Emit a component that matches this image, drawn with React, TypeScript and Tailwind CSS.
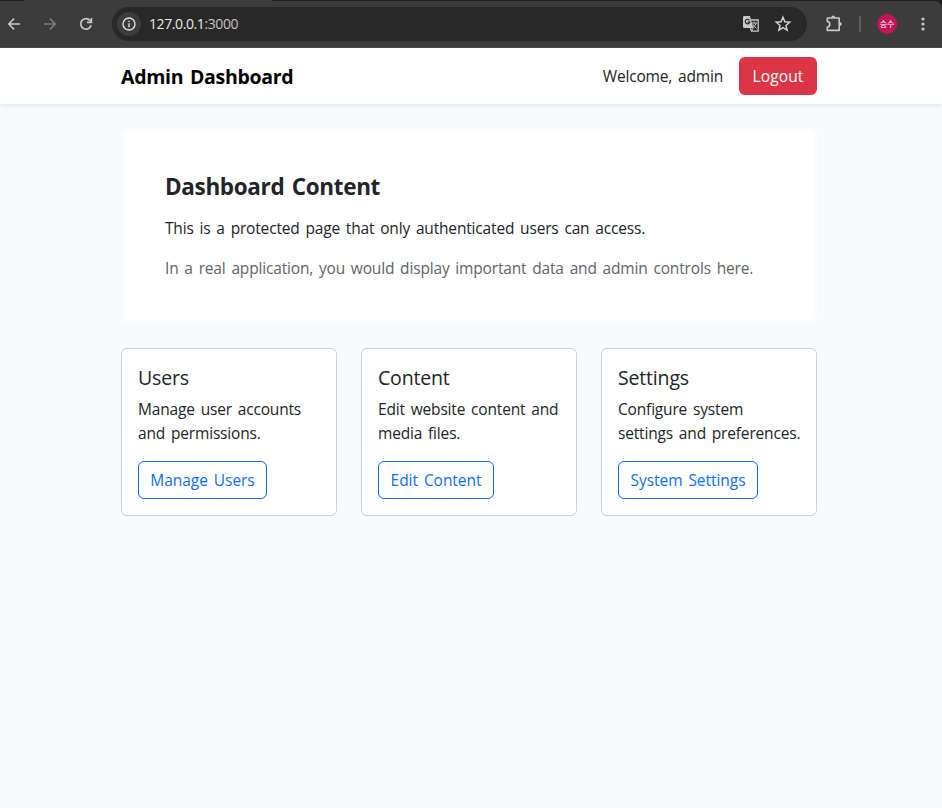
import React from "react";

function BrowserBar() {
  return (
    <div className="h-12 bg-[#1f1f1f] flex flex-col tracking-normal">
      <div className="h-px shrink-0 flex">
        <div className="ml-6 w-[248px] bg-[#3c3c3c]" />
      </div>
      <div className="h-[47px] bg-[#3c3c3c] rounded-tr-lg border-b border-[#4a4a4a] flex items-center pl-[6px] pr-[11px]">
        <svg width="16" height="16" viewBox="0 0 16 16" fill="none" stroke="#c7c7c7" strokeWidth="1.6" className="shrink-0">
          <path d="M14 8H3M8 2.6L2.8 8L8 13.4" />
        </svg>
        <svg width="16" height="16" viewBox="0 0 16 16" fill="none" stroke="#7c7c7c" strokeWidth="1.6" className="ml-5 shrink-0">
          <path d="M2 8H13M8 2.6L13.2 8L8 13.4" />
        </svg>
        <svg width="16" height="16" viewBox="0 0 16 16" fill="none" stroke="#c7c7c7" strokeWidth="1.7" className="ml-5 shrink-0">
          <path d="M13.1 9.3A5.3 5.3 0 1 1 12 4.4L13.4 6" />
          <path d="M13.4 2V6.4H9" />
        </svg>
        <div className="ml-[18px] w-[695px] h-[34px] rounded-full bg-[#282828] flex items-center pl-[5px] pr-[15px]">
          <div className="size-6 rounded-full bg-[#3c3c3c] flex items-center justify-center">
            <svg width="14" height="14" viewBox="0 0 14 14" fill="none" stroke="#dedede" strokeWidth="1.4">
              <circle cx="7" cy="7" r="6" />
              <path d="M7 6.2V10.2M7 3.7V5.1" />
            </svg>
          </div>
          <div className="ml-2 font-['Open_Sans',sans-serif] text-[14px] leading-5 tracking-[-0.4px] text-[#e8e8e8]">
            127.0.0.1<span className="text-[#c2c2c2]">:3000</span>
          </div>
          <div className="flex-1" />
          <svg width="18" height="18" viewBox="0 0 18 18" className="shrink-0">
            <path d="M8 5H16.2V16.2H9.5L8 12" fill="none" stroke="#c7c7c7" strokeWidth="1.3" />
            <path d="M2.2 1H8L11.3 13H2.2Q1 13 1 11.8V2.2Q1 1 2.2 1Z" fill="#c7c7c7" />
            <path d="M7.6 5.4A2.3 2.3 0 1 0 7.8 7.2H5.6" fill="none" stroke="#282828" strokeWidth="1.2" />
            <path d="M9.8 8H15M12.4 6.8V8M14.2 8Q13.5 11 11 12.6M10.8 9.2Q12 12 14.4 13.2M11 13.2L9.6 16" fill="none" stroke="#c7c7c7" />
          </svg>
          <svg width="18" height="18" viewBox="0 0 18 18" fill="none" stroke="#d0d0d0" strokeWidth="1.5" className="ml-[14px] shrink-0">
            <path d="M9 2.3L10.9 6.8L15.7 7.2L12 10.4L13.1 15.1L9 12.6L4.9 15.1L6 10.4L2.3 7.2L7.1 6.8Z" />
          </svg>
        </div>
        <svg width="20" height="20" viewBox="0 0 20 20" fill="none" stroke="#c7c7c7" strokeWidth="1.6" strokeLinejoin="round" className="ml-[17px] shrink-0">
          <path d="M3.3 4H15.2V16.4H3.3V13Q5.8 12.6 5.8 10.2T3.3 7.4Z" />
          <path d="M7.2 3.5A2 2 0 0 1 11.2 3.5ZM15.7 8.1A2 2 0 0 1 15.7 12.1Z" fill="#c7c7c7" stroke="none" />
        </svg>
        <div className="ml-[15px] w-[2px] h-4 bg-[#5e5e5e]" />
        <div className="ml-4 size-5 rounded-full bg-[#c2185b] flex items-center justify-center font-['Noto_Sans_CJK_KR',sans-serif] text-[8px] leading-none text-white whitespace-nowrap">
          승수
        </div>
        <div className="flex-1" />
        <svg width="16" height="16" viewBox="0 0 16 16" fill="#c7c7c7" className="shrink-0">
          <circle cx="8" cy="3" r="1.6" />
          <circle cx="8" cy="8" r="1.6" />
          <circle cx="8" cy="13" r="1.6" />
        </svg>
      </div>
    </div>
  );
}

const cards = [
  { title: "Users", lines: ["Manage user accounts", "and permissions."], action: "Manage Users", width: "w-[129px]" },
  { title: "Content", lines: ["Edit website content and", "media files."], action: "Edit Content", width: "w-[116px]" },
  { title: "Settings", lines: ["Configure system", "settings and preferences."], action: "System Settings", width: "w-[140px]" },
];

export default function App() {
  return (
    <div className="h-[808px] bg-[#f8f9fa] font-['Open_Sans','Noto_Sans',sans-serif] text-[15.5px] leading-6 tracking-[-0.17px] [word-spacing:2px] text-[#212529] whitespace-nowrap overflow-hidden">
      <BrowserBar />
      <nav className="relative h-14 bg-white shadow-[0_2px_4px_rgba(0,0,0,0.075)] pl-[121px]">
        <div className="w-[696px] h-full flex items-center">
          <div className="pt-[2px] text-[19.5px] tracking-[-0.3px] font-bold text-black">Admin Dashboard</div>
          <div className="flex-1" />
          <span>Welcome, admin</span>
          <button className="ml-4 w-[78px] h-[38px] rounded-md bg-[#dc3545] text-white tracking-[0.1px]">Logout</button>
        </div>
      </nav>
      <main className="ml-[121px] w-[696px] pt-6">
        <section className="h-[196px] rounded-md border-4 border-[#fbfcfc] bg-white pl-10 pt-10">
          <h2 className="text-[22.5px] leading-[29px] tracking-[-0.35px] font-bold">Dashboard Content</h2>
          <p className="mt-[15px]">This is a protected page that only authenticated users can access.</p>
          <p className="mt-4 text-[#5f6468]">In a real application, you would display important data and admin controls here.</p>
        </section>
        <div className="mt-6 grid grid-cols-3 gap-6">
          {cards.map((c) => (
            <section key={c.title} className="h-[168px] rounded-md border border-[#d0d1d2] bg-white px-4 pt-[17px]">
              <h5 className="text-[19.5px] leading-6">{c.title}</h5>
              <p className="mt-[7px]">
                {c.lines[0]}
                <br />
                {c.lines[1]}
              </p>
              <button className={`mt-4 h-[38px] rounded-md border border-[#0d6efd] text-[#0d6efd] tracking-[-0.05px] [word-spacing:2px] ${c.width}`}>{c.action}</button>
            </section>
          ))}
        </div>
      </main>
    </div>
  );
}
